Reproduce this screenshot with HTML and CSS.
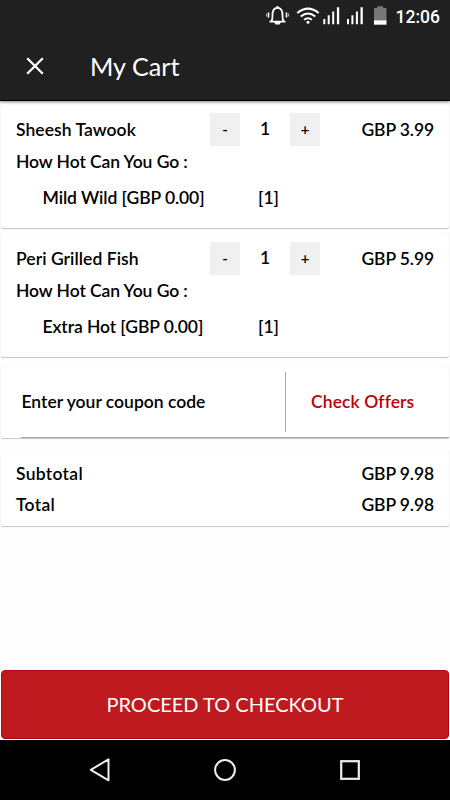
FILE: index.html
```html
<!DOCTYPE html>
<html lang="en">
<head>
  <meta charset="UTF-8">
  <meta name="viewport" content="width=device-width, initial-scale=1">
  <title>My Cart</title>
  <link rel="stylesheet" href="styles.css">
</head>
<body>
  <header class="header">
    <div class="status">
      <svg class="status-icons" width="124" height="32" viewBox="0 0 124 32">
        <!-- bell -->
        <g fill="none" stroke="#fff" stroke-width="1.8">
          <path d="M3.500 21.600h16M5.200 21c1.700-1.500 1.300-4 1.300-6 0-4.800 1.700-7.200 5-7.200s5 2.400 5 7.200c0 2-.4 4.500 1.300 6"/>
          <path d="M2.500 12.500v5M20.500 12.500v5" stroke-width="1.600"/>
          <path d="M.5 13.500v3M22.500 13.500v3" stroke-width="1.300" stroke="#aaa"/>
        </g>
        <path d="M8 22h7l-1.500 2.600h-4zM10.200 6.300h2.600v2h-2.600z" fill="#fff"/>
        <!-- wifi -->
        <g fill="none" stroke="#fff" stroke-width="2">
          <path d="M31.300 13q10.700-8.800 21.400 0M34.700 16.500q7.300-6 14.600 0M38.100 19.800q3.900-3.200 7.800 0"/>
        </g>
        <circle cx="42" cy="22.300" r="1.500" fill="#fff"/>
        <!-- signal bars -->
        <path d="M57.300 19h2v5.200h-2zM61.700 15.300h2v8.900h-2zM66.200 11.500h2v12.700h-2zM70.900 7.200h2.300v17h-2.300z" fill="#fff"/>
        <path d="M81 19h2v5.200h-2zM85.400 15.300h2v8.900h-2zM89.900 11.500h2v12.700h-2zM94.500 7.200h2.300v17h-2.300z" fill="#fff"/>
        <!-- battery -->
        <path d="M108 8h3.200v-1.800h6v1.800h3.300v12.500h-12.500z" fill="#777"/>
        <path d="M108 20.300h12.500v4.400h-12.500z" fill="#fff"/>
      </svg>
      <span class="clock">12:06</span>
    </div>
    <div class="titlebar">
      <svg class="close" width="18" height="18" viewBox="0 0 18 18"><path d="M1.200 1.200l15.600 15.600M16.800 1.200l-15.600 15.600" fill="none" stroke="#fff" stroke-width="2.300"/></svg>
      <h1>My Cart</h1>
    </div>
  </header>

  <main class="cart">
    <section class="card item">
      <div class="row">
        <span class="name">Sheesh Tawook</span>
        <button class="qty">-</button>
        <span class="count">1</span>
        <button class="qty">+</button>
        <span class="price">GBP 3.99</span>
      </div>
      <div class="group">How Hot Can You Go :</div>
      <div class="option">
        <span class="option-name">Mild Wild [GBP 0.00]</span>
        <span>[1]</span>
      </div>
    </section>

    <section class="card item">
      <div class="row">
        <span class="name">Peri Grilled Fish</span>
        <button class="qty">-</button>
        <span class="count">1</span>
        <button class="qty">+</button>
        <span class="price">GBP 5.99</span>
      </div>
      <div class="group">How Hot Can You Go :</div>
      <div class="option">
        <span class="option-name">Extra Hot [GBP 0.00]</span>
        <span>[1]</span>
      </div>
    </section>

    <section class="card coupon">
      <div class="code">Enter your coupon code</div>
      <div class="offers">Check Offers</div>
    </section>

    <section class="card totals">
      <div class="total"><span class="label">Subtotal</span><span class="price">GBP 9.98</span></div>
      <div class="total"><span class="label">Total</span><span class="price">GBP 9.98</span></div>
    </section>
  </main>

  <button class="checkout">PROCEED TO CHECKOUT</button>

  <nav class="nav">
    <svg width="24" height="26" viewBox="0 0 24 26"><path d="M20.500 2.300v21L2.800 12.800z" fill="none" stroke="#eee" stroke-width="2" stroke-linejoin="round"/></svg>
    <svg width="24" height="26" viewBox="0 0 24 26"><circle cx="12" cy="13" r="9.900" fill="none" stroke="#eee" stroke-width="2"/></svg>
    <svg width="24" height="26" viewBox="0 0 24 26"><rect x="3.200" y="4.200" width="17.600" height="17.600" fill="none" stroke="#eee" stroke-width="2.200"/></svg>
  </nav>
</body>
</html>
```
FILE: styles.css
```css
* { box-sizing: border-box; }
body {
  margin: 0;
  height: 800px;
  display: flex;
  flex-direction: column;
  background-color: #fefefe;
  font: 600 17.5px/22px Lato, "Liberation Sans", sans-serif;
  color: #000;
  overflow: hidden;
}
svg { display: block; }
button { border: none; padding: 0; font: inherit; color: inherit; }

.header {
  position: relative;
  z-index: 1;
  height: 101px;
  flex: none;
  background-color: #202020;
  border-bottom: 1px solid #000;
  box-shadow: 0 1px 3px rgba(0, 0, 0, 0.5);
  color: #fff;
}
.status { height: 32px; display: flex; justify-content: flex-end; padding-right: 10px; }
.status-icons { margin-right: 5px; }
.clock { width: 45px; font: 500 17.5px/34px Roboto, sans-serif; text-align: right; }
.titlebar { height: 68px; display: flex; align-items: center; padding-left: 26px; }
.titlebar h1 { margin: 0 0 0 46px; font-size: 25.2px; font-weight: 400; line-height: 32px; }

.cart { flex: 1; padding: 1px 1px 0; }
.card {
  background-color: #fff;
  border-radius: 2px;
  box-shadow: 0 1px 1px rgba(0, 0, 0, 0.22), 0 0 1px rgba(0, 0, 0, 0.12);
}

.item { height: 126px; padding: 11px 15px 0; margin-bottom: 5px; }
.item + .item { height: 124px; padding-top: 9px; margin-bottom: 10px; }
.row { display: flex; height: 33px; align-items: center; }
.name { width: 194px; letter-spacing: 0.05px; }
.qty { width: 30px; height: 33px; padding-bottom: 1px; background-color: #f0f0f0; font-size: 15px; }
.count { width: 50px; padding-bottom: 2px; text-align: center; }
.price { margin-left: auto; letter-spacing: -0.1px; }
.group { margin-top: 5px; letter-spacing: -0.08px; }
.option { display: flex; margin: 14px 0 0 26.5px; }
.option-name { width: 215.5px; letter-spacing: -0.08px; }

.coupon { height: 71px; display: flex; padding-left: 20px; margin-bottom: 14px; }
.code,
.offers { line-height: 70px; border-bottom: 1px solid #aaa; }
.code {
  width: 265px;
  padding-left: 0.5px;
  background: linear-gradient(#aaa, #aaa) no-repeat right 5px / 1px 60px;
}
.offers { flex: 1; padding-left: 25px; color: #b70006; letter-spacing: 0.1px; }

.totals { height: 74px; padding: 11px 15px 0; }
.total { display: flex; margin-bottom: 9px; }
.label { letter-spacing: 0.3px; }

.checkout {
  height: 69px;
  flex: none;
  margin: 0 1px 1px;
  padding-bottom: 2px;
  border: 1px solid #b5060d;
  border-radius: 4px;
  background-color: #be1a20;
  color: #fff;
  font-size: 20px;
  font-weight: 400;
}

.nav {
  height: 60px;
  flex: none;
  display: flex;
  justify-content: space-between;
  align-items: center;
  padding: 0 88px;
  background-color: #000;
}
```
